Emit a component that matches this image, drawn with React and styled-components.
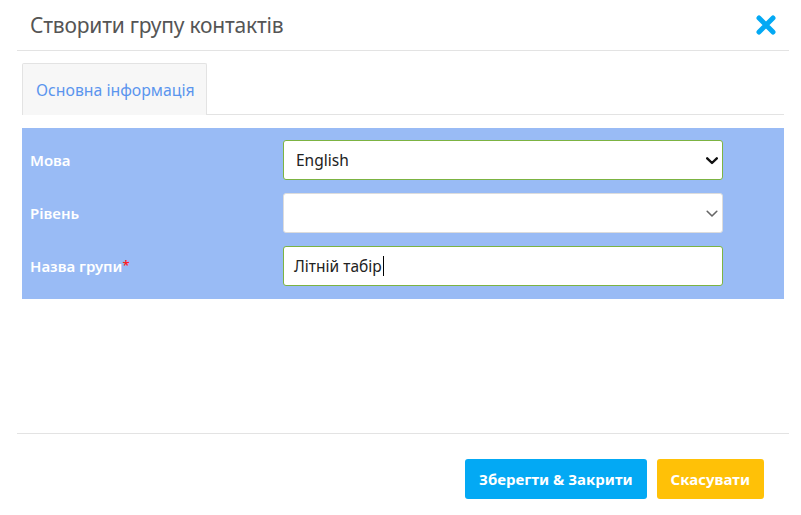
import React from "react";
import styled, { createGlobalStyle } from "styled-components";

const GlobalStyle = createGlobalStyle`
  html, body {
    margin: 0;
    padding: 0;
    background: #ffffff;
    font-family: "Noto Sans", "Open Sans", sans-serif;
  }
`;

const Modal = styled.div`
  width: 801px;
  height: 515px;
  display: flex;
  flex-direction: column;
  box-sizing: border-box;
`;

const Header = styled.div`
  margin: 0 12px 0 17px;
  height: 51px;
  border-bottom: 1px solid #e3e3e3;
  display: flex;
  align-items: center;
  justify-content: space-between;
  padding: 0 12px 0 13px;
  box-sizing: border-box;
`;

const Title = styled.h4`
  margin: 0;
  font-size: 21px;
  font-weight: 400;
  color: #555555;
  letter-spacing: -0.2px;
`;

const CloseButton = styled.button`
  border: 0;
  background: none;
  padding: 0;
  width: 22px;
  height: 22px;
  cursor: pointer;
  display: flex;
`;

const Body = styled.div`
  margin: 12px 17px 0 22px;
  height: 370px;
`;

const TabBar = styled.div`
  display: flex;
  border-bottom: 1px solid #e3e3e3;
`;

const Tab = styled.div`
  width: 185px;
  height: 52px;
  box-sizing: border-box;
  background: #f7f7f7;
  border: 1px solid #e3e3e3;
  border-bottom: 0;
  border-radius: 2px 2px 0 0;
  display: flex;
  align-items: center;
  padding-left: 13px;
  font-size: 15.8px;
  color: #5b95ee;
  margin-bottom: -1px;
`;

const Panel = styled.div`
  margin-top: 13px;
  width: 762px;
  background: #99bbf5;
  padding: 12px 0 13px 0;
  box-sizing: border-box;
  display: flex;
  flex-direction: column;
  gap: 13px;
`;

const Row = styled.div`
  display: grid;
  grid-template-columns: 261px 440px;
  align-items: center;
`;

const Label = styled.label`
  padding-left: 8px;
  font-size: 15px;
  font-weight: 600;
  color: #ffffff;
`;

const Required = styled.span`
  color: #ff1f1f;
  font-size: 13px;
  vertical-align: top;
`;

const SelectWrap = styled.div`
  position: relative;
  height: 40px;
`;

const Select = styled.select`
  appearance: none;
  width: 100%;
  height: 40px;
  box-sizing: border-box;
  border: 1px solid ${(p) => (p.$active ? "#7cb342" : "#dcdcdc")};
  border-radius: 3px;
  background: #ffffff;
  padding: 0 30px 0 12px;
  font-family: inherit;
  font-size: 15.5px;
  color: #222222;
  outline: none;
`;

const Chevron = styled.svg`
  position: absolute;
  right: 5px;
  top: 17px;
  pointer-events: none;
`;

const TextField = styled.div`
  height: 40px;
  box-sizing: border-box;
  border: 1px solid #7cb342;
  border-radius: 3px;
  background: #ffffff;
  padding: 0 10px;
  display: flex;
  align-items: center;
  font-size: 15.5px;
  color: #222222;
`;

const Caret = styled.span`
  display: inline-block;
  width: 1px;
  height: 20px;
  background: #000000;
  margin-left: 1px;
`;

const Footer = styled.div`
  margin: 0 12px 0 17px;
  border-top: 1px solid #e3e3e3;
  padding: 25px 25px 0 0;
  display: flex;
  justify-content: flex-end;
  gap: 10px;
`;

const Button = styled.button`
  height: 40px;
  border: 0;
  border-radius: 3px;
  padding: 0 14px;
  font-family: inherit;
  font-size: 15px;
  font-weight: 700;
  color: #ffffff;
  background: ${(p) => (p.$variant === "warning" ? "#ffc107" : "#03a9f4")};
  cursor: pointer;
`;

const ChevronIcon = ({ color, weight }) => (
  <Chevron width="12" height="8" viewBox="0 0 12 8">
    <path
      d="M1.2 1.3 L6 6 L10.8 1.3"
      fill="none"
      stroke={color}
      strokeWidth={weight}
      strokeLinecap="round"
      strokeLinejoin="round"
    />
  </Chevron>
);

export default function App() {
  return (
    <Modal>
      <GlobalStyle />
      <Header>
        <Title>Створити групу контактів</Title>
        <CloseButton aria-label="close">
          <svg width="22" height="22" viewBox="0 0 22 22">
            <path
              d="M4 4 L18 18 M18 4 L4 18"
              stroke="#03a9f4"
              strokeWidth="5"
              strokeLinecap="round"
            />
          </svg>
        </CloseButton>
      </Header>
      <Body>
        <TabBar>
          <Tab>Основна інформація</Tab>
        </TabBar>
        <Panel>
          <Row>
            <Label>Мова</Label>
            <SelectWrap>
              <Select $active defaultValue="en">
                <option value="en">English</option>
              </Select>
              <ChevronIcon color="#111111" weight={2.4} />
            </SelectWrap>
          </Row>
          <Row>
            <Label>Рівень</Label>
            <SelectWrap>
              <Select defaultValue="">
                <option value=""></option>
              </Select>
              <ChevronIcon color="#666666" weight={1.6} />
            </SelectWrap>
          </Row>
          <Row>
            <Label>
              Назва групи<Required>*</Required>
            </Label>
            <TextField>
              Літній табір
              <Caret />
            </TextField>
          </Row>
        </Panel>
      </Body>
      <Footer>
        <Button>Зберегти &amp; Закрити</Button>
        <Button $variant="warning">Скасувати</Button>
      </Footer>
    </Modal>
  );
}
